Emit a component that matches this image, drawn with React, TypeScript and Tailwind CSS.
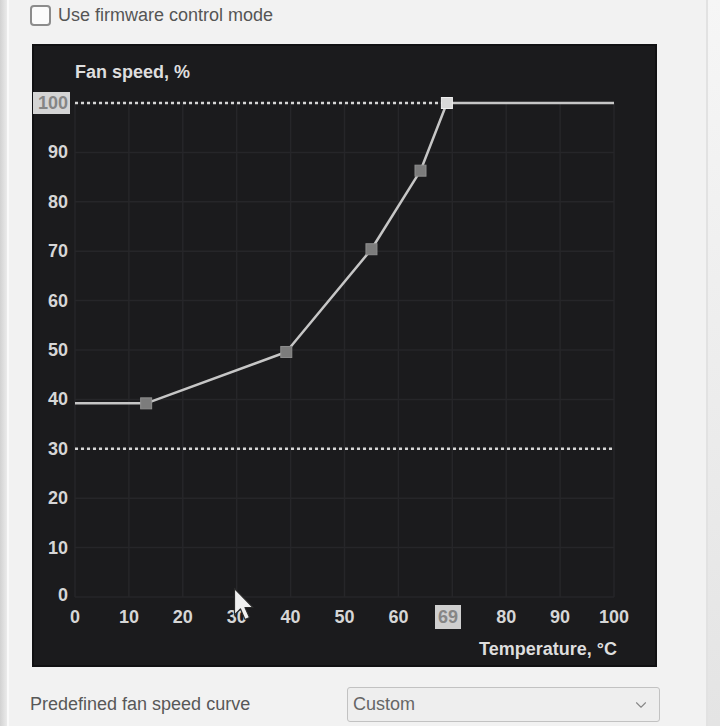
import { ChevronDown } from 'lucide-react';

const FONT = { fontFamily: '"Liberation Sans", Arial, sans-serif' };

// plot area in page pixels: 0..100 °C -> 75..614, 0..100 % -> 597..103
const X0 = 75;
const X1 = 614;
const Y0 = 597;
const Y1 = 103;
const tx = (t: number) => X0 + ((X1 - X0) * t) / 100;
const sy = (s: number) => Y0 - ((Y0 - Y1) * s) / 100;

const curve: [number, number][] = [
  [13.2, 39.2],
  [39.2, 49.6],
  [55, 70.4],
  [64.1, 86.3],
  [69, 100],
];

const ticks = [0, 10, 20, 30, 40, 50, 60, 70, 80, 90, 100];

function FanCurveChart() {
  const pts = [[0, curve[0][1]] as [number, number], ...curve, [100, 100] as [number, number]];
  const line = pts.map(([t, s]) => `${tx(t)},${sy(s)}`).join(' ');

  return (
    <svg width={625} height={623} viewBox="32 44 625 623" className="block" style={FONT}>
      {/* grid */}
      {ticks.map((v) => (
        <line key={'v' + v} x1={tx(v)} y1={Y1} x2={tx(v)} y2={Y0} stroke="#262629" strokeWidth={1.5} />
      ))}
      {ticks.map((v) => (
        <line key={'h' + v} x1={X0} y1={sy(v)} x2={X1} y2={sy(v)} stroke="#262629" strokeWidth={1.5} />
      ))}

      {/* limit markers */}
      <line x1={X0} y1={sy(100)} x2={tx(69)} y2={sy(100)} stroke="#d6d6d6" strokeWidth={2.5} strokeDasharray="3 3" />
      <line x1={X0} y1={sy(30)} x2={X1} y2={sy(30)} stroke="#d6d6d6" strokeWidth={2.5} strokeDasharray="3 3" />

      <polyline points={line} fill="none" stroke="#c6c6c6" strokeWidth={2.5} strokeLinejoin="round" />
      {curve.map(([t, s], i) => {
        const last = i === curve.length - 1;
        return (
          <rect
            key={t}
            x={tx(t) - 5.5}
            y={sy(s) - 5.5}
            width={11}
            height={11}
            fill={last ? '#d9d9d9' : '#7c7c7c'}
            stroke={last ? '#eeeeee' : '#8e8e8e'}
            strokeWidth={1}
          />
        );
      })}

      <text x={75} y={72} fill="#dedede" fontSize={18} fontWeight={700} dominantBaseline="central">
        Fan speed, %
      </text>
      <text x={617} y={649} fill="#dedede" fontSize={18} fontWeight={700} textAnchor="end" dominantBaseline="central">
        Temperature, °C
      </text>

      {/* y labels */}
      <rect x={33} y={92} width={37} height={22} fill="#d4d4d4" />
      {ticks.map((v) => (
        <text
          key={'yl' + v}
          x={68}
          y={sy(v) - (v === 0 ? 2 : 0)}
          fill={v === 100 ? '#858585' : '#d6d6d6'}
          fontSize={18}
          fontWeight={700}
          textAnchor="end"
          dominantBaseline="central"
        >
          {v}
        </text>
      ))}

      {/* x labels, 70 replaced by the current temperature */}
      <rect x={435} y={605} width={26} height={24} fill="#cfcfcf" />
      {ticks.map((v) => (
        <text
          key={'xl' + v}
          x={v === 70 ? 448 : tx(v)}
          y={617}
          fill={v === 70 ? '#868686' : '#d6d6d6'}
          fontSize={18}
          fontWeight={700}
          textAnchor="middle"
          dominantBaseline="central"
        >
          {v === 70 ? 69 : v}
        </text>
      ))}
    </svg>
  );
}

function Cursor() {
  return (
    <svg width={24} height={36} viewBox="0 0 24 36" className="absolute left-[233px] top-[587px]">
      <path d="M1.5 1.5 L1.5 28 L7.5 22 L12 32.5 L16.5 30.5 L12 20.5 L20 20.5 Z" fill="#f0f0f0" stroke="#2a2a2a" strokeWidth={1.2} strokeLinejoin="round" />
    </svg>
  );
}

export default function App() {
  return (
    <div className="relative flex w-[720px] h-[726px] overflow-hidden bg-[#f2f2f2]" style={FONT}>
      <div className="w-[9px] shrink-0 bg-gradient-to-r from-[#d2d2d2] to-[#ebebeb] border-r-2 border-[#fafafa]" />

      <div className="flex flex-1 flex-col">
        <div className="flex h-[30px] items-center gap-[7px] pl-[21px]">
          <span className="w-[21px] h-[21px] rounded-[4px] border-2 border-[#8c8c8c] bg-[#fbfbfb]" />
          <span className="text-[18px] text-[#555]">Use firmware control mode</span>
        </div>

        <div className="ml-[23px] mt-[14px] w-[625px] h-[623px] bg-[#1b1b1d] shadow-[inset_0_0_0_2px_#111113]">
          <FanCurveChart />
        </div>

        <div className="mt-[20px] flex h-[35px] items-center justify-between pl-[21px] pr-[46px]">
          <span className="text-[18px] text-[#585858]">Predefined fan speed curve</span>
          <div className="flex w-[313px] h-[35px] items-center justify-between rounded-[3px] border border-[#c2c2c2] bg-[#eeeeee] pl-[5px] pr-[9px]">
            <span className="text-[18px] text-[#666]">Custom</span>
            <ChevronDown size={18} strokeWidth={1.5} className="text-[#888]" />
          </div>
        </div>
      </div>

      <div className="w-[14px] shrink-0 border-l-2 border-[#e2e2e2] bg-gradient-to-b from-[#f6f6f6] to-[#e4e4e4]" />

      <Cursor />
    </div>
  );
}
